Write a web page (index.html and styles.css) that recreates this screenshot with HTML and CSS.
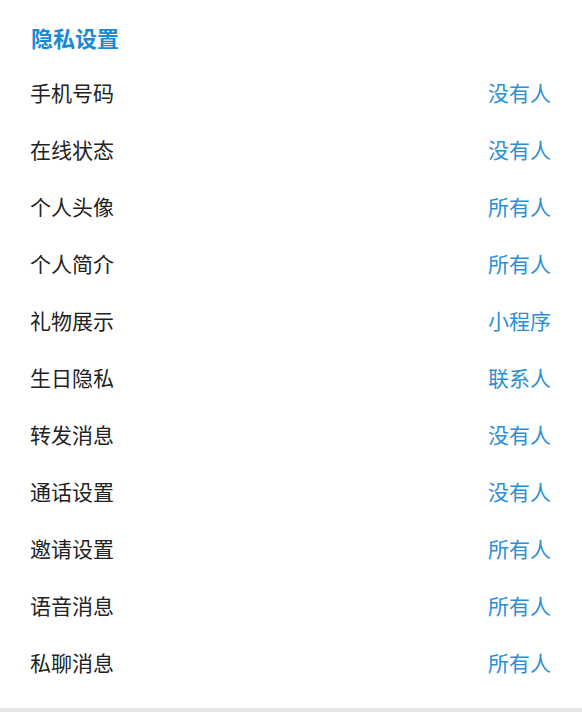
FILE: index.html
```html
<!DOCTYPE html>
<html lang="zh-CN">
<head>
<meta charset="utf-8">
<link rel="stylesheet" href="styles.css">
</head>
<body>
<div class="panel">
  <div class="title">隐私设置</div>
  <div class="row"><span class="label">手机号码</span><span class="value">没有人</span></div>
  <div class="row"><span class="label">在线状态</span><span class="value">没有人</span></div>
  <div class="row"><span class="label">个人头像</span><span class="value">所有人</span></div>
  <div class="row"><span class="label">个人简介</span><span class="value">所有人</span></div>
  <div class="row"><span class="label">礼物展示</span><span class="value">小程序</span></div>
  <div class="row"><span class="label">生日隐私</span><span class="value">联系人</span></div>
  <div class="row"><span class="label">转发消息</span><span class="value">没有人</span></div>
  <div class="row"><span class="label">通话设置</span><span class="value">没有人</span></div>
  <div class="row"><span class="label">邀请设置</span><span class="value">所有人</span></div>
  <div class="row"><span class="label">语音消息</span><span class="value">所有人</span></div>
  <div class="row"><span class="label">私聊消息</span><span class="value">所有人</span></div>
</div>
<div class="footer"></div>
</body>
</html>
```

FILE: styles.css
```css
html, body {
  margin: 0;
  padding: 0;
  background: #ffffff;
}
body {
  font-family: "Microsoft YaHei", "Noto Sans CJK SC", "Noto Sans", sans-serif;
}
.panel {
  padding: 24px 31px 18px 30px;
}
.title {
  font-size: 22px;
  line-height: 26px;
  font-weight: bold;
  color: #1a8ad4;
  padding-left: 1px;
  margin-bottom: 13px;
}
.row {
  display: flex;
  justify-content: space-between;
  align-items: center;
  height: 57px;
  font-size: 21px;
}
.label {
  color: #222222;
}
.value {
  color: #2b8fd6;
}
.footer {
  height: 4px;
  background: #e6e6e6;
}
```
